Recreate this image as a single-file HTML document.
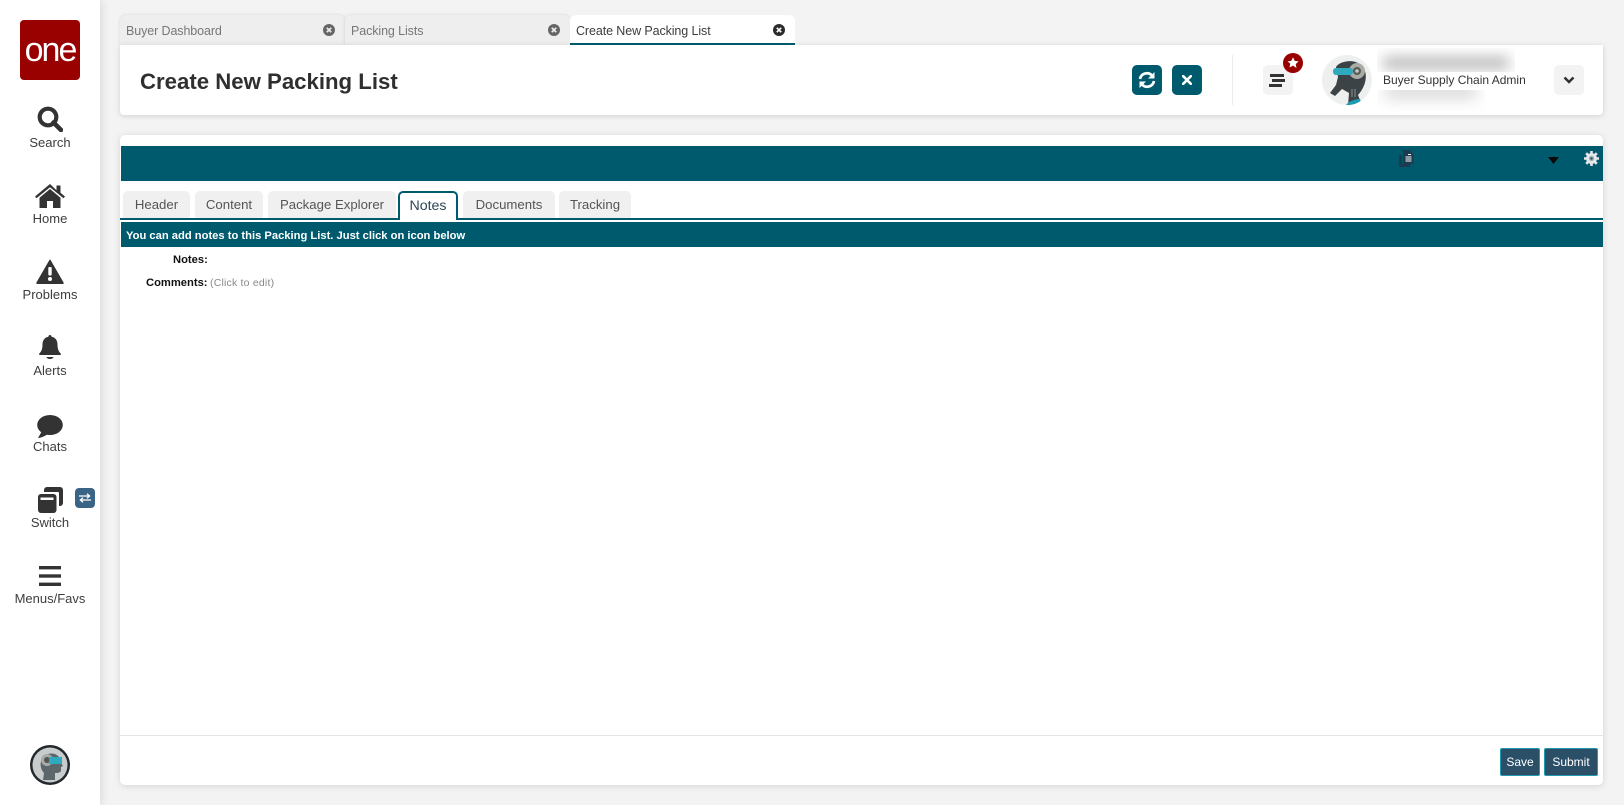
<!DOCTYPE html>
<html><head><meta charset="utf-8"><title>Create New Packing List</title>
<style>
html,body{margin:0;padding:0;width:1624px;height:805px;overflow:hidden;background:#f3f3f3;font-family:"Liberation Sans",sans-serif;color:#333}
div,span,svg{position:absolute;box-sizing:border-box}
.t{white-space:nowrap;line-height:16px}
.nav{left:0;width:100px;text-align:center;font-size:13px;color:#3d3d3d;white-space:nowrap;line-height:16px;margin-top:1px}
.tab{top:15px;height:30px;background:#eee;border-radius:6px 6px 0 0;box-shadow:0 0 3px rgba(0,0,0,.12)}
.tab .t{left:6px;top:8px;font-size:12.5px;color:#777;letter-spacing:-.1px}
.sub{top:191px;height:27px;background:#f0f0f0;border-radius:5px 5px 0 0;text-align:center;font-size:13.2px;line-height:28px;color:#555;white-space:nowrap}
.btn{top:65px;width:30px;height:30px;border-radius:5px}
</style></head><body>
<div style="left:0;top:0;width:100px;height:805px;background:#fff;box-shadow:2px 0 8px rgba(0,0,0,.1)"></div>
<div style="left:20px;top:20px;width:60px;height:60px;background:#990000;border-radius:4px;color:#fff;font-size:34px;line-height:60px;text-align:center;letter-spacing:-2px">one</div>

<svg style="left:37px;top:106px" width="26" height="26" viewBox="0 0 26 26"><circle cx="11" cy="11" r="8.3" fill="none" stroke="#333" stroke-width="4.2"/><path d="M16.5 16.5L24 24" stroke="#333" stroke-width="4.6" stroke-linecap="round"/></svg>
<div class="nav" style="top:134px">Search</div>
<svg style="left:35px;top:184px" width="30" height="24" viewBox="0 0 30 24" fill="#333"><path d="M15 0L0 12.5l1.5 1.800L15 3.300l13.500 11 1.500-1.800-4.500-3.700V1.500h-4v4.800z"/><path d="M15 5L4.500 13.800V24h7.500v-7h6v7h7.500V13.800z"/></svg>
<div class="nav" style="top:210px">Home</div>
<svg style="left:36px;top:259px" width="28" height="25" viewBox="0 0 28 25"><path d="M14 1L1 23.500a1 1 0 0 0 1 1.500h24a1 1 0 0 0 1-1.500z" fill="#333" stroke="#333" stroke-linejoin="round"/><rect x="12.300" y="8" width="3.400" height="8.500" rx="1" fill="#fff"/><circle cx="14" cy="20" r="2" fill="#fff"/></svg>
<div class="nav" style="top:286px">Problems</div>
<svg style="left:39px;top:335px" width="22" height="26" viewBox="0 0 22 26" fill="#333"><path d="M11 0c-1 0-1.600.8-1.600 1.800C5.500 2.500 3.500 5.500 3.500 9.500c0 5-1.300 7-3.200 9-.5.600-.2 1.500.6 1.500h20.200c.8 0 1.100-.9.600-1.500-1.900-2-3.200-4-3.200-9 0-4-2-7-5.900-7.700C12.600.8 12 0 11 0z"/><path d="M7.500 22h7c0 .9-1.500 2-3.500 2s-3.500-1.100-3.500-2z"/></svg>
<div class="nav" style="top:362px">Alerts</div>
<svg style="left:37px;top:415px" width="26" height="23" viewBox="0 0 26 23" fill="#333"><ellipse cx="13" cy="10" rx="12.800" ry="10"/><path d="M5 16L1 23c3 0 7-2 10-4z"/></svg>
<div class="nav" style="top:438px">Chats</div>
<svg style="left:38px;top:487px" width="25" height="26" viewBox="0 0 25 26"><path d="M6 3a3 3 0 0 1 3-3h13a3 3 0 0 1 3 3v13a3 3 0 0 1-3 3h-1V6a1 1 0 0 0-1-1H6z" fill="#333"/><rect x="0" y="7" width="18.500" height="19" rx="3" fill="#333"/><rect x="2.500" y="10.500" width="13" height="2.500" fill="#fff"/></svg>
<div style="left:75px;top:488px;width:20px;height:20px;background:#3a6486;border-radius:4px"></div>
<svg style="left:79px;top:493px" width="12" height="10" viewBox="0 0 12 10" fill="none" stroke="#fff" stroke-width="1.300"><path d="M0 3h10M8 .8L10.600 3 8 5.200" /><path d="M12 7H2M4 4.800L1.400 7 4 9.200"/></svg>
<div class="nav" style="top:514px">Switch</div>
<svg style="left:39px;top:566px" width="22" height="20" viewBox="0 0 22 20" fill="#333"><rect width="22" height="3.400" y="0"/><rect width="22" height="3.400" y="8.300"/><rect width="22" height="3.400" y="16.600"/></svg>
<div class="nav" style="top:590px">Menus/Favs</div>

<svg style="left:30px;top:745px" width="40" height="40" viewBox="0 0 40 40"><circle cx="20" cy="20" r="20" fill="#23282c"/><circle cx="20" cy="20" r="17.500" fill="#c9cccc"/><path d="M13 35l1-7c-4-4-5-12 0-17 5-4 12-3 15 1l2 6 2 3-2 1v4c-1 2-4 2-6 2v7z" fill="#5c666b"/><circle cx="17" cy="15" r="6" fill="#a9aca6"/><circle cx="17" cy="15" r="3" fill="#555"/><rect x="19" y="12" width="13" height="7" fill="#2fa9bd"/></svg>

<!-- top tabs -->
<div class="tab" style="left:120px;width:225px"><span class="t">Buyer Dashboard</span></div>
<div class="tab" style="left:345px;width:225px"><span class="t" style="left:6px">Packing Lists</span></div>
<svg style="left:323px;top:24px" width="12" height="12" viewBox="0 0 12 12"><circle cx="6" cy="6" r="6" fill="#666"/><path d="M3.800 3.800l4.400 4.400M8.200 3.800L3.800 8.200" stroke="#eee" stroke-width="1.700"/></svg>
<svg style="left:548px;top:24px" width="12" height="12" viewBox="0 0 12 12"><circle cx="6" cy="6" r="6" fill="#666"/><path d="M3.800 3.800l4.400 4.400M8.200 3.800L3.800 8.200" stroke="#eee" stroke-width="1.700"/></svg>

<!-- header card -->
<div style="left:120px;top:45px;width:1483px;height:70px;background:#fff;border-radius:0 0 4px 4px;box-shadow:0 1px 6px rgba(0,0,0,.14)"></div>
<div class="tab" style="left:570px;width:225px;background:#fff;border-bottom:2px solid #005a6e;box-shadow:none"><span class="t" style="color:#3c3c3c">Create New Packing List</span></div>
<svg style="left:773px;top:24px" width="12" height="12" viewBox="0 0 12 12"><circle cx="6" cy="6" r="6" fill="#2b2b2b"/><path d="M3.800 3.800l4.400 4.400M8.200 3.800L3.800 8.200" stroke="#fff" stroke-width="1.700"/></svg>
<div class="t" style="left:140px;top:67px;font-size:22.2px;line-height:30px;font-weight:bold;color:#2f2f2f">Create New Packing List</div>

<div class="btn" style="left:1132px;background:#005a6e"></div>
<svg style="left:1138px;top:71px" width="18" height="18" viewBox="0 0 18 18" fill="none" stroke="#fff" stroke-width="2.700"><path d="M2 8a7 7 0 0 1 12-3.500"/><path d="M16.500 1v6.500h-6.500z" fill="#fff" stroke="none"/><path d="M16 10a7 7 0 0 1-12 3.500"/><path d="M1.500 17v-6.500h6.500z" fill="#fff" stroke="none"/></svg>
<div class="btn" style="left:1172px;background:#005a6e"></div>
<svg style="left:1182px;top:75px" width="10" height="10" viewBox="0 0 10 10"><path d="M1.200 1.200l7.600 7.600M8.800 1.200L1.200 8.800" stroke="#fff" stroke-width="2.600" stroke-linecap="round"/></svg>
<div style="left:1232px;top:55px;width:1px;height:50px;background:#ececec"></div>
<div class="btn" style="left:1263px;background:#f3f3f3"></div>
<svg style="left:1269px;top:74px" width="16" height="13" viewBox="0 0 16 13" fill="#333"><rect x="1" y="0" width="14" height="3"/><rect x="3" y="5" width="13" height="3"/><rect x="0" y="10" width="13" height="3"/></svg>
<div style="left:1283px;top:53px;width:20px;height:20px;border-radius:50%;background:#990000"></div>
<svg style="left:1287px;top:57px" width="12" height="12" viewBox="0 0 12 12" fill="#fff"><path d="M6 .3l1.700 3.600 3.900.5-2.900 2.700.8 3.900L6 8.600 2.500 10.500l.8-3.900L.4 4.400l3.900-.5z"/></svg>

<svg style="left:1322px;top:55px" width="50" height="50" viewBox="0 0 50 50"><defs><clipPath id="c"><circle cx="25" cy="25" r="25"/></clipPath></defs><circle cx="25" cy="25" r="25" fill="#eef0f0"/><g clip-path="url(#c)"><path d="M14 12C18 5 38 2 43 16c3 10-3 20-7 24l4 10H26l1-12-7-4-7 7-5-3 6-8 2-8z" fill="#3b4347"/><circle cx="35" cy="16" r="8" fill="#a9aca6"/><circle cx="35" cy="16" r="4" fill="#5a5a55"/><circle cx="35" cy="16" r="1.800" fill="#c9c9c2"/><rect x="11" y="13" width="20" height="7" rx="3" fill="#2fa9bd"/><path d="M24 50c2-3 8-6 14-6l2 6z" fill="#1c9cb4"/><path d="M30 34v8M33 34v8" stroke="#8b9296" stroke-width="1"/></g></svg>

<div style="left:1377px;top:48px;width:138px;height:24px;overflow:hidden;background:#fff"><div style="left:6px;top:9px;width:126px;height:12px;background:#b4b4b4;filter:blur(7px)"></div></div>
<div style="left:1377px;top:90px;width:108px;height:22px;overflow:hidden;background:#fff"><div style="left:8px;top:-6px;width:92px;height:14px;background:#d4d4d4;filter:blur(8px)"></div></div>
<div class="t" style="left:1383px;top:72px;font-size:12px;color:#333">Buyer Supply Chain Admin</div>
<div class="btn" style="left:1554px;background:#f3f3f3"></div>
<svg style="left:1563px;top:76px" width="12" height="8" viewBox="0 0 12 8"><path d="M1.500 1.500L6 6l4.500-4.500" fill="none" stroke="#333" stroke-width="2.500"/></svg>

<!-- main card -->
<div style="left:120px;top:135px;width:1483px;height:650px;background:#fff;border-radius:5px;box-shadow:0 1px 7px rgba(0,0,0,.13)"></div>
<div style="left:121px;top:146px;width:1482px;height:35px;background:#005a6e"></div>
<svg style="left:1399px;top:150px" width="15" height="17" viewBox="0 0 15 17"><path d="M0 5h3v9h8v3H1a1 1 0 0 1-1-1z" fill="#1d3a4f"/><path d="M4 0h6l4.500 4.500V14H4z" fill="#1d3a4f"/><path d="M6.500 7h6M6.500 9h6M6.500 11h6M9 4.500h3" stroke="#fff" stroke-width="1"/></svg>
<svg style="left:1548px;top:157px" width="11" height="7" viewBox="0 0 11 7"><path d="M0 0h11L5.500 7z" fill="#0a0a0a"/></svg>
<svg style="left:1584px;top:151px" width="15" height="15" viewBox="0 0 15 15"><g stroke="#e8e8e8" stroke-width="2.600"><path d="M7.500 0v15M0 7.500h15M2.200 2.200l10.600 10.600M12.800 2.200L2.200 12.800"/></g><circle cx="7.500" cy="7.500" r="5.400" fill="#e8e8e8"/><circle cx="7.500" cy="7.500" r="2.700" fill="#9ab0b6"/><circle cx="7.500" cy="7.500" r="1.200" fill="#2b5563"/></svg>

<div class="sub" style="left:123px;width:67px">Header</div>
<div class="sub" style="left:195px;width:68px">Content</div>
<div class="sub" style="left:268px;width:128px">Package Explorer</div>
<div class="sub" style="left:463px;width:92px">Documents</div>
<div class="sub" style="left:559px;width:72px">Tracking</div>
<div style="left:120px;top:218px;width:1483px;height:2px;background:#005a6e"></div>
<div class="sub" style="left:398px;width:60px;height:29px;background:#fff;border:2px solid #005a6e;border-bottom:0;color:#2f4858;line-height:27px;font-size:14.2px">Notes</div>
<div style="left:121px;top:222px;width:1482px;height:25px;background:#005a6e"></div>
<div class="t" style="left:126px;top:228px;font-size:11.2px;font-weight:bold;color:#fff">You can add notes to this Packing List. Just click on icon below</div>
<div class="t" style="left:173px;top:252px;font-size:11.2px;font-weight:bold;color:#111">Notes:</div>
<div class="t" style="left:146px;top:275px;font-size:11.2px;font-weight:bold;color:#111">Comments:</div>
<div class="t" style="left:210px;top:275px;font-size:10.5px;color:#888;letter-spacing:.2px">(Click to edit)</div>

<div style="left:120px;top:735px;width:1483px;height:1px;background:#e5e5e5"></div>
<div style="left:1500px;top:748px;width:40px;height:28px;background:#2c4f68;border:1px solid #1f9ab0;border-radius:2px;color:#fff;font-size:12px;line-height:26px;text-align:center">Save</div>
<div style="left:1544px;top:748px;width:54px;height:28px;background:#2c4f68;border:1px solid #1f9ab0;border-radius:2px;color:#fff;font-size:12px;line-height:26px;text-align:center">Submit</div>
</body></html>
